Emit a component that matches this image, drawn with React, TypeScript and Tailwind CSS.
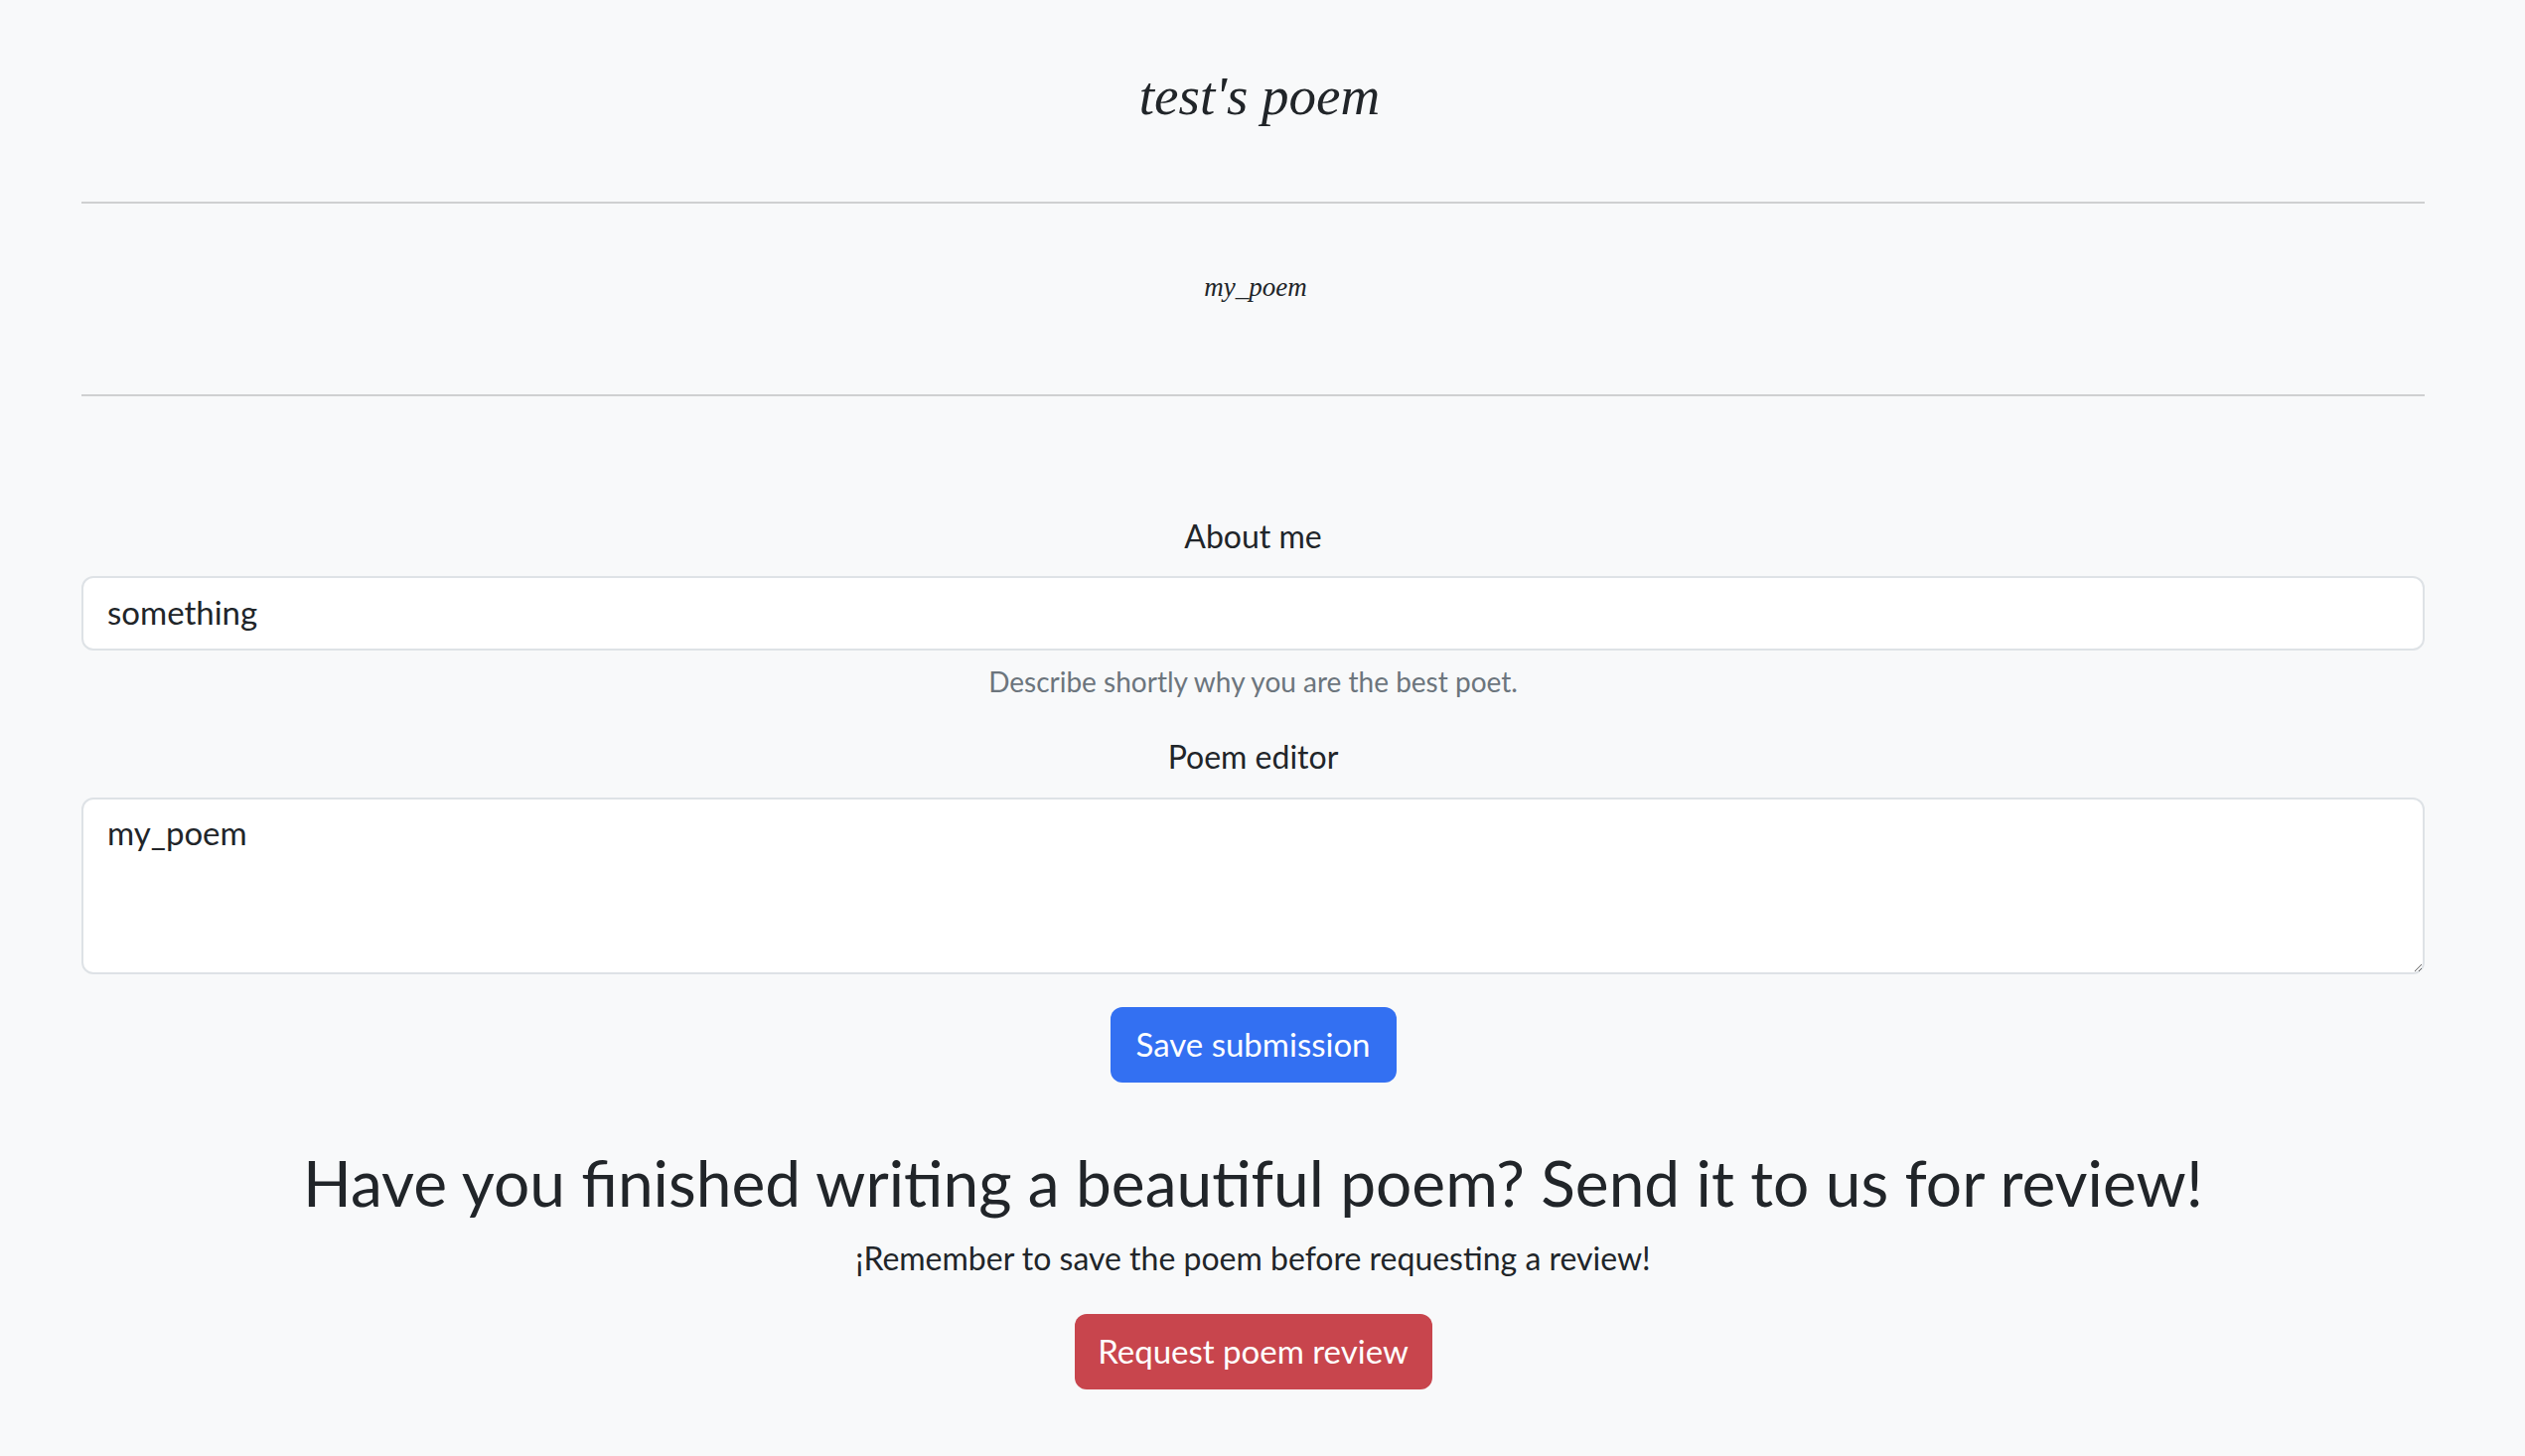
import React from "react";

export default function App() {
  return (
    <div
      className="min-h-screen bg-[#f8f9fa] pt-[64px] pl-[82px] pr-[101px] pb-[40px] text-[#212529]"
      style={{ fontFamily: "Lato, 'Open Sans', sans-serif" }}
    >
      <h1
        className="pl-[13px] text-center text-[55px] leading-[66px] italic"
        style={{ fontFamily: "'Liberation Serif', 'DejaVu Serif', serif" }}
      >
        test's poem
      </h1>
      <hr className="mt-[73px] border-0 border-t-2 border-[#cfd0d1]" />
      <p
        className="mt-[64px] pl-[5px] text-center text-[27px] leading-[40px] italic"
        style={{ fontFamily: "'Liberation Serif', 'DejaVu Serif', serif" }}
      >
        my_poem
      </p>
      <hr className="mt-[88px] border-0 border-t-2 border-[#cfd0d1]" />

      <label className="mt-[117px] block text-center text-[32px] leading-[48px]">About me</label>
      <input
        className="mt-[16px] block h-[75px] w-full rounded-[12px] border-2 border-[#dee2e6] bg-white px-[24px] pb-[3px] text-[33px] text-[#212529] outline-none"
        defaultValue="something"
      />
      <div className="mt-[10px] text-center text-[28px] leading-[42px] text-[#6c757d]">
        Describe shortly why you are the best poet.
      </div>

      <label className="mt-[31px] block text-center text-[32px] leading-[48px]">Poem editor</label>
      <textarea
        className="mt-[17px] block h-[178px] w-full rounded-[12px] border-2 border-[#dee2e6] bg-white px-[24px] pt-[9px] pb-[12px] text-[33px] leading-[48px] text-[#212529] outline-none"
        defaultValue="my_poem"
      />

      <div className="mt-[33px] flex justify-center">
        <button className="flex h-[76px] w-[288px] items-center justify-center rounded-[12px] bg-[#3370f2] text-[33px] text-white">
          Save submission
        </button>
      </div>

      <h2 className="mt-[62px] text-center text-[64px] leading-[77px]">
        Have you finished writing a beautiful poem? Send it to us for review!
      </h2>
      <p className="mt-[14px] text-center text-[32px] leading-[48px]">
        ¡Remember to save the poem before requesting a review!
      </p>
      <div className="mt-[32px] flex justify-center">
        <button className="flex h-[76px] w-[360px] items-center justify-center rounded-[12px] bg-[#c8454d] text-[33px] text-white">
          Request poem review
        </button>
      </div>
    </div>
  );
}
